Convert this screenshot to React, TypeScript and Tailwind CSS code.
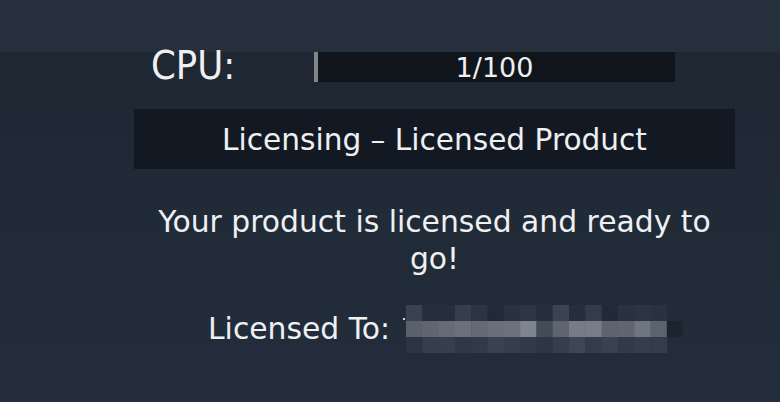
import React from "react";

// pixelated (redacted) licensee name, 3 rows x 16 cells of 16.3px
const mosaic: string[][] = [
  ["#3a4250", "#262e3b", "#262e3b", "#363e4b", "#2c3442", "#222a37", "#2a3240", "#2e3644", "#262e3b", "#3c4452", "#262e3b", "#343c4a", "#222a37", "#2a3240", "#2c3442", "#2a3240"],
  ["#5a616c", "#5f6671", "#656c77", "#6a717c", "#636a75", "#686f7a", "#6b727d", "#7e8590", "#444b58", "#5e6571", "#757c88", "#767d89", "#5d6470", "#5f6672", "#6f7682", "#5c6370"],
  ["#2c3442", "#373f4c", "#373f4c", "#303846", "#323a48", "#3a4250", "#363e4c", "#323a48", "#2e3644", "#363e4c", "#3e4654", "#343c4a", "#3a4250", "#323a48", "#363e4c", "#343c4a"],
];

function RedactedName() {
  const cw = 16.3;
  const ch = 16;
  return (
    <svg width="281" height="48" viewBox="0 0 281 48" className="block ml-[12px]">
      <rect x="1" y="13" width="2" height="2" fill="#d4d7dc" />
      {mosaic.map((row, r) =>
        row.map((c, i) => (
          <rect key={`${r}-${i}`} x={4 + i * cw} y={r * ch} width={cw + 0.4} height={ch} fill={c} />
        ))
      )}
      <rect x={4 + 16 * cw} y={16} width="16" height="16" fill="#1c2430" />
    </svg>
  );
}

export default function App() {
  const cpu = 1;
  const cpuMax = 100;

  return (
    <div
      className="w-[780px] h-[402px] overflow-hidden text-[#eef0f2] bg-[linear-gradient(to_bottom,#262f3c_0px,#262f3c_52px,#1f2733_52px,#232d3b_100%)]"
      style={{ fontFamily: '"DejaVu Sans", "Liberation Sans", sans-serif' }}
    >
      <div className="pt-[52px] ml-[134px] w-[601px]">
        {/* CPU usage */}
        <div className="flex items-center h-[30px]">
          <div
            className="w-[180px] pl-[17px] mb-[3px] text-[39.5px] leading-none"
            style={{ fontFamily: '"DejaVu Sans Condensed", "DejaVu Sans", sans-serif' }}
          >
            CPU:
          </div>
          <div className="relative w-[361px] h-[30px] bg-[#10151c] flex items-center justify-center">
            <div className="absolute left-0 top-0 h-full bg-[#80848b]" style={{ width: `${(cpu / cpuMax) * 100}%` }} />
            <span className="relative text-[27px] leading-none">
              {cpu}/{cpuMax}
            </span>
          </div>
        </div>

        {/* Licensing header */}
        <div className="mt-[27px] h-[60px] pt-[3px] bg-[#131923] flex items-center justify-center text-[29.6px] leading-none">
          Licensing – Licensed Product
        </div>

        <p className="mt-[34px] text-center text-[29.8px] leading-[37px]">
          Your product is licensed and ready to go!
        </p>

        <div className="mt-[28px] h-[48px] flex items-center pl-[74px] text-[29.8px] leading-[36px]">
          <span>Licensed To:</span>
          <RedactedName />
        </div>
      </div>
    </div>
  );
}
